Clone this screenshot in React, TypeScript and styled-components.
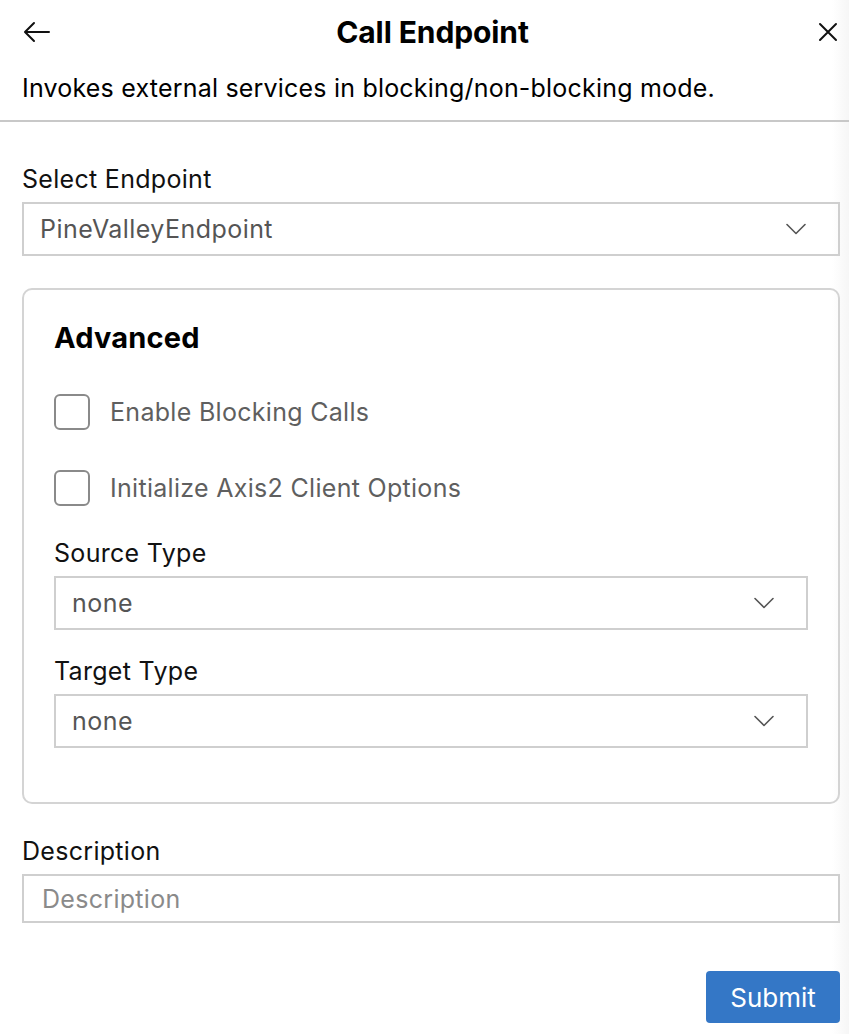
import React from "react";
import styled, { createGlobalStyle } from "styled-components";

const GlobalStyle = createGlobalStyle`
  html, body {
    margin: 0;
    padding: 0;
    background: #ffffff;
  }
  body {
    font-family: Inter, "Liberation Sans", Arial, sans-serif;
    color: #000;
  }
`;

const ArrowLeft = () => (
  <svg width="28" height="22" viewBox="0 0 28 22" fill="none" stroke="#111" strokeWidth="2" strokeLinecap="round" strokeLinejoin="round">
    <path d="M26 11H3M11 2L2 11l9 9" />
  </svg>
);

const CloseIcon = () => (
  <svg width="20" height="20" viewBox="0 0 20 20" fill="none" stroke="#111" strokeWidth="2" strokeLinecap="round">
    <path d="M2 2l16 16M18 2L2 18" />
  </svg>
);

const Chevron = () => (
  <svg width="20" height="12" viewBox="0 0 20 12" fill="none" stroke="#555" strokeWidth="1.6" strokeLinecap="round" strokeLinejoin="round">
    <path d="M1 1.5l9 9 9-9" />
  </svg>
);

const Select = ({ value }: { value: string }) => (
  <SelectBox>
    <SelectValue>{value}</SelectValue>
    <Chevron />
  </SelectBox>
);

const Check = ({ label }: { label: string }) => (
  <CheckRow>
    <CheckBox />
    <CheckLabel>{label}</CheckLabel>
  </CheckRow>
);

export default function App() {
  return (
    <Page>
      <GlobalStyle />
      <Header>
        <IconButton>
          <ArrowLeft />
        </IconButton>
        <Title>Call Endpoint</Title>
        <IconButton>
          <CloseIcon />
        </IconButton>
      </Header>
      <Subtitle>Invokes external services in blocking/non-blocking mode.</Subtitle>
      <Divider />
      <Form>
        <Field>
          <Label>Select Endpoint</Label>
          <Select value="PineValleyEndpoint" />
        </Field>
        <Card>
          <CardTitle>Advanced</CardTitle>
          <Checks>
            <Check label="Enable Blocking Calls" />
            <Check label="Initialize Axis2 Client Options" />
          </Checks>
          <Field>
            <Label>Source Type</Label>
            <Select value="none" />
          </Field>
          <Field>
            <Label>Target Type</Label>
            <Select value="none" />
          </Field>
        </Card>
        <Field>
          <Label>Description</Label>
          <TextInput placeholder="Description" />
        </Field>
        <Actions>
          <SubmitButton>Submit</SubmitButton>
        </Actions>
      </Form>
    </Page>
  );
}

const Page = styled.div`
  width: 849px;
  min-height: 1034px;
  box-sizing: border-box;
  background: linear-gradient(to right, #fff 0, #fff 832px, #f6f6f6 849px);
`;

const Header = styled.header`
  display: flex;
  align-items: center;
  justify-content: space-between;
  height: 64px;
  padding: 0 6px 0 22px;
`;

const IconButton = styled.span`
  display: flex;
  align-items: center;
  justify-content: center;
  width: 30px;
  height: 30px;
`;

const Title = styled.h1`
  margin: 0;
  font-size: 30px;
  font-weight: 700;
  letter-spacing: -0.1px;
`;

const Subtitle = styled.p`
  margin: 8px 0 0;
  padding: 0 22px;
  font-size: 25px;
  letter-spacing: 0.2px;
  line-height: 32px;
`;

const Divider = styled.hr`
  margin: 16px 0 0;
  border: none;
  height: 2px;
  background: #c8c8c8;
`;

const Form = styled.div`
  display: flex;
  flex-direction: column;
  gap: 32px;
  padding: 42px 9px 0 22px;
`;

const Field = styled.div`
  display: flex;
  flex-direction: column;
  gap: 8px;
`;

const Label = styled.label`
  font-size: 25px;
  letter-spacing: 0.3px;
  line-height: 30px;
  color: #111;
`;

const SelectBox = styled.div`
  display: flex;
  align-items: center;
  justify-content: space-between;
  height: 54px;
  box-sizing: border-box;
  border: 2px solid #cfcfcf;
  padding: 0 32px 0 16px;
`;

const SelectValue = styled.span`
  font-size: 25px;
  letter-spacing: 0.45px;
  color: #555;
`;

const Card = styled.section`
  display: flex;
  flex-direction: column;
  gap: 26px;
  border: 2px solid #d4d4d4;
  border-radius: 10px;
  padding: 28px 30px 54px 30px;
`;

const CardTitle = styled.h2`
  margin: 0;
  font-size: 29px;
  font-weight: 700;
  letter-spacing: 0.2px;
  line-height: 40px;
`;

const Checks = styled.div`
  display: flex;
  flex-direction: column;
  gap: 40px;
  padding: 10px 0 6px;
`;

const CheckRow = styled.div`
  display: flex;
  align-items: center;
  gap: 20px;
`;

const CheckBox = styled.span`
  width: 36px;
  height: 36px;
  box-sizing: border-box;
  border: 2px solid #8a8a8a;
  border-radius: 6px;
`;

const CheckLabel = styled.span`
  font-size: 25px;
  letter-spacing: 0.3px;
  color: #5f5f5f;
`;

const TextInput = styled.input`
  height: 49px;
  box-sizing: border-box;
  border: 2px solid #cfcfcf;
  padding: 0 18px;
  font-family: Inter, "Liberation Sans", Arial, sans-serif;
  font-size: 25px;
  letter-spacing: 0.3px;
  outline: none;
  &::placeholder {
    color: #8a8a8a;
  }
`;

const Actions = styled.div`
  display: flex;
  justify-content: flex-end;
  padding-top: 16px;
`;

const SubmitButton = styled.button`
  width: 134px;
  height: 52px;
  border: none;
  border-radius: 4px;
  background: #3477c6;
  color: #fff;
  font-family: Inter, "Liberation Sans", Arial, sans-serif;
  font-size: 26px;
`;
